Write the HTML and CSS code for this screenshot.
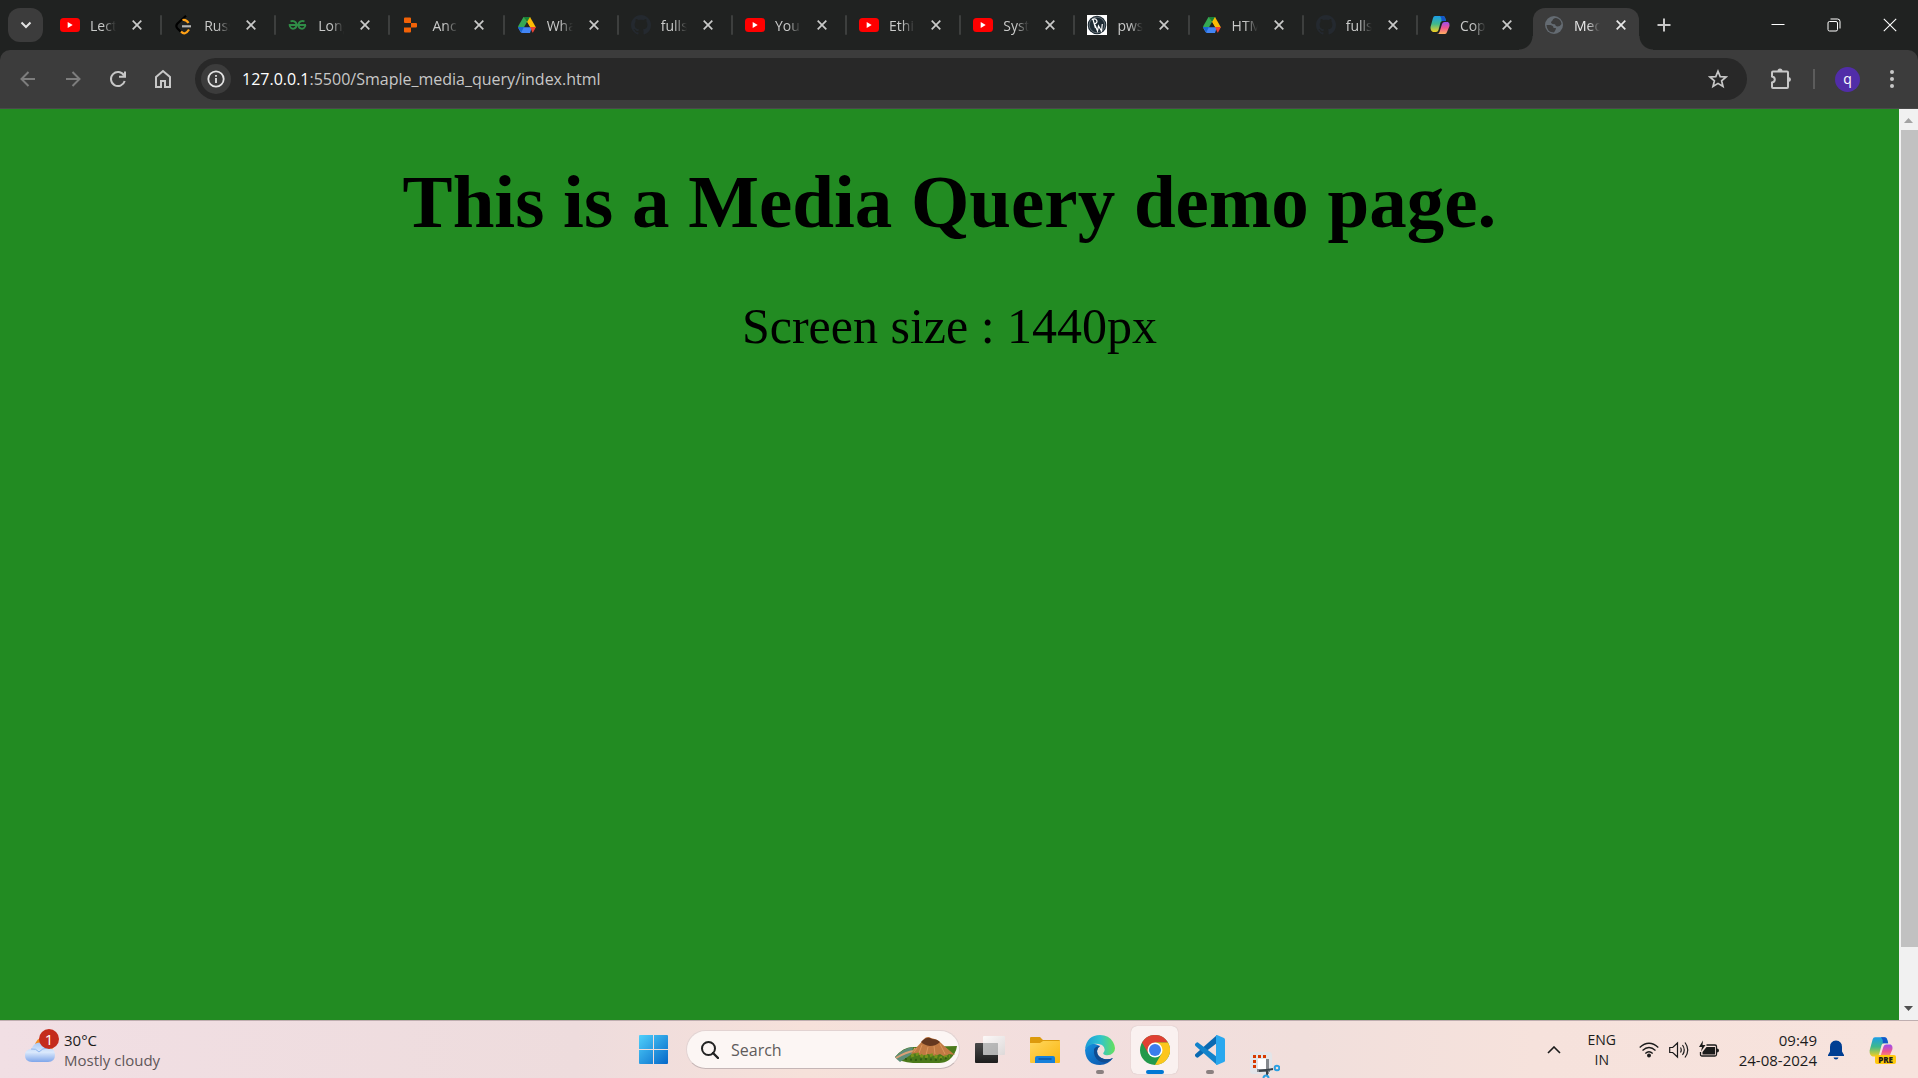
FILE: index.html
```html
<!DOCTYPE html>
<html lang="en">
<head>
<meta charset="utf-8">
<meta name="viewport" content="width=device-width, initial-scale=1">
<title>Media Query</title>
<link rel="stylesheet" href="styles.css">
</head>
<body>
<svg class="sprite" aria-hidden="true">
  <defs>
    <linearGradient id="cp-left" x1="0" y1="0" x2="0" y2="1"><stop offset="0" stop-color="#1b9de8"/><stop offset=".5" stop-color="#3fb98b"/><stop offset="1" stop-color="#f4cf22"/></linearGradient>
    <linearGradient id="cp-right" x1="0" y1="0" x2="0" y2="1"><stop offset="0" stop-color="#9a4df0"/><stop offset=".5" stop-color="#f0568e"/><stop offset="1" stop-color="#ffb060"/></linearGradient>
    <linearGradient id="win" x1="0" y1="0" x2="1" y2="1"><stop offset="0" stop-color="#4fd0fb"/><stop offset="1" stop-color="#0567c8"/></linearGradient>
    <linearGradient id="cloud" x1="0" y1="0" x2="0" y2="1"><stop offset="0" stop-color="#a9c9f6"/><stop offset=".5" stop-color="#dbe9fc"/><stop offset="1" stop-color="#7fa6ea"/></linearGradient>
    <linearGradient id="edge-top" x1="0" y1="0" x2="1" y2="0"><stop offset="0" stop-color="#1b9ad8"/><stop offset=".5" stop-color="#2fc3cf"/><stop offset="1" stop-color="#66e05a"/></linearGradient>
    <linearGradient id="edge-low" x1="0" y1="0" x2="1" y2="1"><stop offset="0" stop-color="#1590df"/><stop offset="1" stop-color="#0c4ea6"/></linearGradient>
    <linearGradient id="folder" x1="0" y1="0" x2="1" y2="1"><stop offset="0" stop-color="#ffd75e"/><stop offset="1" stop-color="#fbb60f"/></linearGradient>
    <linearGradient id="dark-pane" x1="0" y1="0" x2="0" y2="1"><stop offset="0" stop-color="#4a4a4a"/><stop offset="1" stop-color="#1d1d1d"/></linearGradient>
    <linearGradient id="light-pane" x1="0" y1="0" x2="1" y2="1"><stop offset="0" stop-color="#fff"/><stop offset="1" stop-color="#d8d8d8"/></linearGradient>
  </defs>
  <symbol id="close" viewBox="0 0 10 10"><path d="M.7.7l8.6 8.6M9.3.7L.7 9.3" fill="none" stroke="currentColor" stroke-width="1.7"/></symbol>
  <symbol id="youtube" viewBox="0 0 20 20"><rect y="3" width="20" height="14" rx="3.5" fill="#f00"/><path d="M7.700 7v6l5-3z" fill="#fff"/></symbol>
  <symbol id="leetcode" viewBox="0 0 20 20" fill="none" stroke-width="2.200"><path d="M12 .8L3.500 8.500q-2.300 2.500 0 5L7 17" stroke="#000"/><path d="M8.500 5q3.500-1 6 3M7 16.500q4 4.500 8-2" stroke="#ffa116"/><path d="M8 11.300h9" stroke="#b3b3b3"/></symbol>
  <symbol id="gfg" viewBox="0 0 20 20" fill="none" stroke="#2f8d46" stroke-width="1.900"><path d="M2.500 6.500c2-1 6-.5 6 3.500s-5 5-6.500 1.500c-.3-.7-.3-1-.3-1.500H18M16.500 6.500c-2-1-6-.5-6 3.500s5 5 6.500 1.500c.3-.7.3-1 .3-1.500"/></symbol>
  <symbol id="replit" viewBox="0 0 20 20"><path d="M3 2.500h5q1 0 1 1V8H3q-1 0-1-1V3.500q0-1 1-1zM9 8h5q1 0 1 1v2.500q0 1-1 1H9zM2 12.500h7v4q0 1-1 1H3q-1 0-1-1z" fill="#f26207"/></symbol>
  <symbol id="drive" viewBox="0 0 20 20"><path d="M6.500 2h7l-8 15L1 11.500z" fill="#34a853"/><path d="M7 2h6l6 10.500h-6z" fill="#fbbc04"/><path d="M6.500 2H13l-3 5z" fill="#188038"/><path d="M4.500 12H15l-2 6H5.500q-1.500 0-2.300-1.500L1 12.500z" fill="#4285f4"/><path d="M13 12h6l-3 5.500h-.5z" fill="#ea4335"/><path d="M1 12h6l-2.800 5.500z" fill="#1967d2"/><path d="M10 7l3 5.200H7z" fill="#202221"/></symbol>
  <symbol id="github" viewBox="0 0 16 16"><path fill="#24292f" d="M8 0C3.580 0 0 3.580 0 8c0 3.540 2.290 6.530 5.470 7.590.4.070.55-.17.55-.38 0-.19-.01-.82-.01-1.490-2.010.37-2.530-.49-2.690-.94-.09-.23-.48-.94-.82-1.130-.28-.15-.68-.52-.01-.53.63-.01 1.080.58 1.230.82.72 1.210 1.870.87 2.330.66.070-.52.28-.87.51-1.070-1.780-.2-3.640-.89-3.640-3.950 0-.87.31-1.590.82-2.150-.08-.2-.36-1.020.08-2.120 0 0 .67-.21 2.200.82.64-.18 1.320-.27 2-.27s1.360.09 2 .27c1.530-1.040 2.200-.82 2.200-.82.44 1.100.16 1.920.08 2.120.51.56.82 1.270.82 2.150 0 3.070-1.870 3.750-3.650 3.950.29.25.54.73.54 1.480 0 1.070-.01 1.930-.01 2.200 0 .21.15.46.55.38A8.010 8.010 0 0 0 16 8c0-4.420-3.580-8-8-8z"/></symbol>
  <symbol id="pw" viewBox="0 0 20 20"><path fill="#fff" d="M0 0h20v20H0z"/><circle cx="10" cy="10" r="9.300" fill="#1d2a33"/><circle cx="10" cy="10" r="7.800" fill="none" stroke="#8d979c" stroke-width=".6"/><path d="M6 4.500l2.500 8.500M5 4.500c5-2 7 3 2.500 4.500M8 10l2.500 6 1-5 3 5 .8-7" fill="none" stroke="#fff" stroke-width="1.200"/></symbol>
  <symbol id="copilot" viewBox="0 0 20 20"><path d="M5 1h8q1.500 0 2 1.500L16 6h-3.500Q11 6 10.500 7.500L8.500 15q-.5 2-2.500 2H3Q.3 16 .5 12L3 3q.5-2 2-2z" fill="url(#cp-left)"/><path d="M10 1h3q1.500 0 2 1.500L16 6h-4.500Q12 3 10 1z" fill="#1457c9"/><path d="M15 19H7q2 0 2.700-2.500L12 9q.7-2 2.500-2H18q2 1 1.500 4L17 17q-.5 2-2 2z" fill="url(#cp-right)"/></symbol>
  <symbol id="globe" viewBox="0 0 20 20"><circle cx="10" cy="10" r="9" fill="#646b72"/><path d="M12 3q-3 0-3.500 2.500Q7 6 7 8q2 1.500 4 1.200.5 2.300 2.500 2.300 2.500 0 4-2.500Q17 4 12 3zM2.500 10h4q3 .5 3 3H12q0 2-2 4.500-7 0-7.500-7.500z" fill="#3c3c3c"/></symbol>
</svg>

<div class="screen">
  <header class="browser">
    <div class="tabstrip">
      <button class="tab-search" aria-label="Search tabs"><svg viewBox="0 0 12 8" width="12" height="8"><path d="M1.500 1.500L6 6l4.500-4.500" fill="none" stroke="#e3e3e3" stroke-width="2"/></svg></button>
      <div class="tabs">
        <div class="tab"><svg class="favicon"><use href="#youtube"/></svg><span class="tab-title">Lect</span><button class="tab-close" aria-label="Close tab"><svg><use href="#close"/></svg></button></div>
        <div class="tab"><svg class="favicon"><use href="#leetcode"/></svg><span class="tab-title">Russ</span><button class="tab-close" aria-label="Close tab"><svg><use href="#close"/></svg></button></div>
        <div class="tab"><svg class="favicon"><use href="#gfg"/></svg><span class="tab-title">Long</span><button class="tab-close" aria-label="Close tab"><svg><use href="#close"/></svg></button></div>
        <div class="tab"><svg class="favicon"><use href="#replit"/></svg><span class="tab-title">Anc</span><button class="tab-close" aria-label="Close tab"><svg><use href="#close"/></svg></button></div>
        <div class="tab"><svg class="favicon"><use href="#drive"/></svg><span class="tab-title">Wha</span><button class="tab-close" aria-label="Close tab"><svg><use href="#close"/></svg></button></div>
        <div class="tab"><svg class="favicon"><use href="#github"/></svg><span class="tab-title">fulls</span><button class="tab-close" aria-label="Close tab"><svg><use href="#close"/></svg></button></div>
        <div class="tab"><svg class="favicon"><use href="#youtube"/></svg><span class="tab-title">You</span><button class="tab-close" aria-label="Close tab"><svg><use href="#close"/></svg></button></div>
        <div class="tab"><svg class="favicon"><use href="#youtube"/></svg><span class="tab-title">Ethi</span><button class="tab-close" aria-label="Close tab"><svg><use href="#close"/></svg></button></div>
        <div class="tab"><svg class="favicon"><use href="#youtube"/></svg><span class="tab-title">Syst</span><button class="tab-close" aria-label="Close tab"><svg><use href="#close"/></svg></button></div>
        <div class="tab"><svg class="favicon"><use href="#pw"/></svg><span class="tab-title">pws</span><button class="tab-close" aria-label="Close tab"><svg><use href="#close"/></svg></button></div>
        <div class="tab"><svg class="favicon"><use href="#drive"/></svg><span class="tab-title">HTM</span><button class="tab-close" aria-label="Close tab"><svg><use href="#close"/></svg></button></div>
        <div class="tab"><svg class="favicon"><use href="#github"/></svg><span class="tab-title">fulls</span><button class="tab-close" aria-label="Close tab"><svg><use href="#close"/></svg></button></div>
        <div class="tab"><svg class="favicon"><use href="#copilot"/></svg><span class="tab-title">Cop</span><button class="tab-close" aria-label="Close tab"><svg><use href="#close"/></svg></button></div>
        <div class="tab active"><svg class="favicon"><use href="#globe"/></svg><span class="tab-title">Med</span><button class="tab-close" aria-label="Close tab"><svg><use href="#close"/></svg></button></div>
      </div>
      <button class="new-tab" aria-label="New tab"><svg viewBox="0 0 14 14" width="14" height="14"><path d="M7 .5v13M.5 7h13" stroke="#c7c7c7" stroke-width="2"/></svg></button>
      <div class="window-controls">
        <button aria-label="Minimize"><svg viewBox="0 0 14 14" width="14" height="14"><path d="M.5 6.500h13" stroke="#fff"/></svg></button>
        <button aria-label="Restore"><svg viewBox="0 0 14 14" width="14" height="14" fill="none" stroke="#fff"><rect x="1" y="3.500" width="9.500" height="9.500" rx="1.500"/><path d="M3.500 1h7q2.500 0 2.500 2.500v7"/></svg></button>
        <button aria-label="Close"><svg viewBox="0 0 14 14" width="14" height="14"><path d="M.8.8l12.400 12.400M13.200.8L.8 13.200" stroke="#fff" stroke-width="1.100"/></svg></button>
      </div>
    </div>

    <div class="toolbar">
      <nav class="nav-buttons">
        <button class="dim" aria-label="Back"><svg viewBox="0 0 20 20"><path d="M17 10H4M10.500 3L3.500 10l7 7"/></svg></button>
        <button class="dim" aria-label="Forward"><svg viewBox="0 0 20 20"><path d="M3 10h13M9.500 3l7 7-7 7"/></svg></button>
        <button aria-label="Reload"><svg viewBox="0 0 20 20"><path d="M16 6.500A7 7 0 1 0 16.700 12M17 2.500v5.300h-6"/></svg></button>
        <button aria-label="Home"><svg viewBox="0 0 20 20"><path d="M3 8L10 2l7 6v10h-5v-6H8v6H3z"/></svg></button>
      </nav>
      <div class="omnibox">
        <button class="site-info" aria-label="View site information"><svg viewBox="0 0 18 18" width="18" height="18"><circle cx="9" cy="9" r="7.700" fill="none" stroke="#e3e3e3" stroke-width="1.800"/><path d="M9 8v5M9 5v1.800" stroke="#e3e3e3" stroke-width="1.800"/></svg></button>
        <a class="address" href="#"><span class="host">127.0.0.1</span>:5500/Smaple_media_query/index.html</a>
        <button class="bookmark" aria-label="Bookmark this tab"><svg viewBox="0 0 20 20" width="20" height="20"><path d="M10 2.200l2.200 5.400 5.800.4-4.400 3.800 1.400 5.700-5-3.100-5 3.100 1.400-5.700L2 8l5.800-.4z" fill="none" stroke="#c7c7c7" stroke-width="1.700"/></svg></button>
      </div>
      <div class="actions">
        <button class="extensions" aria-label="Extensions"><svg viewBox="0 0 22 22" width="22" height="22"><path d="M2 4.500Q2 3.500 3 3.500H17q1 0 1 1V19q0 1-1 1H3q-1 0-1-1v-4.500q2.800-.5 2.800-3T2 8.500z" fill="none" stroke="#c7c7c7" stroke-width="2"/><path d="M7.500 3a2.500 2.500 0 0 1 5 0zM18.500 9a2.500 2.500 0 0 1 0 5z" fill="#c7c7c7"/></svg></button>
        <span class="divider"></span>
        <button class="avatar" aria-label="Profile">q</button>
        <button class="menu" aria-label="Menu"><svg viewBox="0 0 4 20" width="4" height="20" fill="#c7c7c7"><circle cx="2" cy="3" r="2"/><circle cx="2" cy="10" r="2"/><circle cx="2" cy="17" r="2"/></svg></button>
      </div>
    </div>
  </header>

  <div class="viewport">
    <main class="page">
      <h1>This is a Media Query demo page.</h1>
      <p>Screen size : 1440px</p>
    </main>
    <div class="scrollbar" aria-hidden="true">
      <svg viewBox="0 0 19 21"><path d="M5 14h9l-4.500-5z" fill="#a3a3a3"/></svg>
      <div class="track"><div class="thumb"></div></div>
      <svg viewBox="0 0 19 21"><path d="M5 7h9l-4.500 5z" fill="#505050"/></svg>
    </div>
  </div>

  <footer class="taskbar">
    <button class="weather">
      <span class="weather-icon"><svg viewBox="0 0 30 34" width="30" height="34"><circle cx="19" cy="17" r="9" fill="#f58a1f"/><path d="M7 33q-7 0-7-6.500T6.500 20Q9 13 15.500 13.500 21 14 23 19q7 0 7 7t-7 7z" fill="url(#cloud)"/><path d="M6 20q5-1 8 3 3-4 9-4" fill="none" stroke="#8fb5ef"/></svg><span class="badge">1</span></span>
      <span class="weather-text"><span>30°C</span><span class="muted">Mostly cloudy</span></span>
    </button>

    <div class="dock">
      <button class="app" aria-label="Start"><svg viewBox="0 0 29 29" width="29" height="29" fill="url(#win)"><path d="M1 0h13v14H0V1q0-1 1-1zM15 0h13q1 0 1 1v13H15zM0 15h14v14H1q-1 0-1-1zM15 15h14v13q0 1-1 1H15z"/></svg></button>
      <label class="search">
        <svg viewBox="0 0 18 18" width="18" height="18"><circle cx="7.500" cy="7.500" r="6.500" fill="none" stroke="#222" stroke-width="2"/><path d="M12 12l5 5" stroke="#222" stroke-width="2.400" stroke-linecap="round"/></svg>
        <input type="search" placeholder="Search" aria-label="Search">
        <svg viewBox="0 0 62 26" width="62" height="26"><path d="M0 20Q9 9 19 10l43-1q-1 8-8 14-4 3-10 3H18Q5 25 0 20z" fill="#4b7a1b"/><path d="M0 20Q8 11 18 10l-1 7-12 8Q1 22 0 20z" fill="#5d8d79"/><path d="M1 21q10-6 18-7l1-3" fill="none" stroke="#d9a077" stroke-width="2"/><path d="M18 14Q24 8 30 1q3-2 6 0 6 1 9 4 5 5 15 13l-6-1-4 3-5-3-5 2-7-2-7 2-4-3-6 1z" fill="#c17a43"/><path d="M28 3q5-4 9-1 5 0 8 3-4 4-10 4-6-1-9-4z" fill="#65381f"/><path d="M27 8l-3 8M33 10l-2 8M39 9l1 8M45 7l5 10M22 11l-3 4" stroke="#dc965d" stroke-width="1"/><path d="M16 19l7-2 6 3 8-2 8 3 10-2" fill="none" stroke="#77921d" stroke-width="3" stroke-dasharray="3 2"/><path d="M10 22l10 1 10-1 12 1 10-2" fill="none" stroke="#315b12" stroke-width="2" stroke-dasharray="2 3"/></svg>
      </label>
      <button class="app" aria-label="Task view"><svg viewBox="0 0 30 30" width="30" height="30"><rect y="8" width="23" height="20" rx="1" fill="url(#dark-pane)"/><rect x="8" y="1" width="22" height="19" rx="1" fill="url(#light-pane)" opacity=".8"/><path d="M8 8h15v12H8z" fill="#aaa" opacity=".6"/></svg></button>
      <button class="app" aria-label="File Explorer"><svg viewBox="0 0 30 30" width="30" height="30"><path d="M0 3q0-1 1-1h9l3 3h16q1 0 1 1v5H0z" fill="#dc9a0c"/><path d="M0 8h10l3-2h17v21q0 1-1 1H1q-1 0-1-1z" fill="url(#folder)"/><path d="M5 28v-5q0-2 2-2h16q2 0 2 2v5z" fill="#1680da"/><path d="M9 24h12" stroke="#0b55a4" stroke-width="1.500" stroke-linecap="round"/></svg></button>
      <button class="app running" aria-label="Edge"><svg viewBox="0 0 30 30" width="30" height="30"><path d="M0 15q1 15 15 15 8 0 13-7-4 2-9 1-7-2-7-8 0-3 3-5Q3 5 0 15z" fill="url(#edge-low)"/><path d="M9 14q-1 8 5 12 7 4 14-3-4 2-9 1-7-2-7-8 0-3 3-5-4 0-6 3z" fill="#104c91"/><path d="M0 14Q2 0 15 0q9 0 13 7 4 7 0 11-3 3-8 2-3-1-1-3 2-4-2-7Q7 6 0 14z" fill="url(#edge-top)"/></svg></button>
      <button class="app running current" aria-label="Chrome"><svg viewBox="0 0 30 30" width="30" height="30"><circle cx="15" cy="15" r="15" fill="#23994b"/><path d="M2 7.500A15 15 0 0 1 28 7.500H15L8.500 18.700z" fill="#df4032"/><path d="M28 7.500A15 15 0 0 1 15 30l6.500-11.200L15 7.500z" fill="#fcc61c"/><circle cx="15" cy="15" r="7.500" fill="#fff"/><circle cx="15" cy="15" r="6" fill="#3b7ded"/></svg></button>
      <button class="app running" aria-label="Visual Studio Code"><svg viewBox="0 0 30 30" width="30" height="30"><path d="M22 0v8L3 22.500q-1 .5-2-.5l-1-1q-.5-1 .5-2z" fill="#0a6ab2"/><path d="M22 30v-8L3 7.500q-1-.5-2 .5l-1 1q-.5 1 .5 2z" fill="#1283cb"/><path d="M22 0l7 3q1 .5 1 1.500v21q0 1-1 1.500l-7 3q-1 0-1-1V1q0-1 1-1z" fill="#29a8ef"/></svg></button>
      <button class="app low" aria-label="Snipping Tool"><svg viewBox="0 0 30 26" width="30" height="26"><rect width="22" height="22" rx="3" fill="#e3e5e9"/><path d="M8 7h8v10H8z" fill="#fff"/><path d="M4.500 16V4.500H17" fill="none" stroke="#d83b01" stroke-width="3" stroke-dasharray="3 2"/><path d="M7 18.500h13M17.500 7v15" stroke="#85898e" stroke-width="3"/><path d="M9 19l14-2M17 18v6" fill="none" stroke="#3a4249" stroke-width="2"/><circle cx="27" cy="16" r="2.300" fill="none" stroke="#2ba0e2" stroke-width="2"/><circle cx="16" cy="26" r="2.500" fill="none" stroke="#2ba0e2" stroke-width="2"/></svg></button>
    </div>

    <div class="tray">
      <button class="chevron" aria-label="Show hidden icons"><svg viewBox="0 0 14 8" width="14" height="8"><path d="M1 7l6-6 6 6" fill="none" stroke="#1b1b1b" stroke-width="1.600"/></svg></button>
      <button class="language"><span>ENG</span><span>IN</span></button>
      <button class="status" aria-label="Network, volume and battery">
        <svg viewBox="0 0 20 20" width="20" height="20" fill="none" stroke="#1b1b1b" stroke-width="1.300"><path d="M.7 7.500q9.300-8.500 18.600 0M3.500 10.500q6.500-6 13 0M6.300 13.500q3.700-3.500 7.400 0"/><circle cx="10" cy="15.500" r="1.300" fill="#1b1b1b"/></svg>
        <svg viewBox="0 0 20 20" width="20" height="20" fill="none" stroke="#1b1b1b" stroke-width="1.200"><path d="M.7 7.500h3L8.500 3v14l-4.800-4.500h-3zM11.500 7.500q1.500 2.500 0 5M13.500 5q3.500 5 0 10M16 2.500q5.500 7.500 0 15"/></svg>
        <svg viewBox="0 0 20 20" width="20" height="20"><path d="M7.500 5H16q1.500 0 1.500 1.500v8Q17.500 16 16 16H3q-1.500 0-1.500-1.500V12" fill="none" stroke="#1b1b1b" stroke-width="1.300"/><path d="M7.500 7H16v7.500H3.500V12zM18 8.500q2 0 2 2t-2 2zM4 .5L0 7h3l-1 4.500L6.500 5h-3z" fill="#1b1b1b"/></svg>
      </button>
      <button class="clock"><span>09:49</span><span>24-08-2024</span></button>
      <button class="bell" aria-label="Notifications"><svg viewBox="0 0 18 20" width="18" height="20" fill="#003e92"><path d="M9 .5q6 .5 6 6.500v4.500l2 3.500v1H1v-1l2-3.500V7Q3 1 9 .5zM6.500 17.500h5q-.5 2-2.500 2t-2.500-2z"/></svg></button>
      <button class="copilot" aria-label="Copilot"><svg width="28" height="28" viewBox="0 0 28 28"><use href="#copilot" width="28" height="24" preserveAspectRatio="none"/></svg><span>PRE</span></button>
    </div>
  </footer>
</div>
</body>
</html>
```
FILE: styles.css
```css
* {
  box-sizing: border-box;
}

body {
  margin: 0;
  font-family: "Open Sans", "Noto Sans", sans-serif;
}

button {
  display: flex;
  align-items: center;
  justify-content: center;
  padding: 0;
  border: 0;
  background: none;
  color: inherit;
  font: inherit;
}

.sprite {
  position: absolute;
  width: 0;
  height: 0;
}

.screen {
  display: flex;
  flex-direction: column;
  height: 100vh;
  overflow: hidden;
}

/* Tab strip */
.tabstrip {
  display: flex;
  height: 50px;
  background: #202221;
}

.tab-search {
  flex: none;
  width: 35px;
  height: 34px;
  margin: 8px 6px 8px 8px;
  border-radius: 12px;
  background: #3c3c3c;
}

.tabs {
  display: flex;
  flex: 0 1 1598px;
  min-width: 0;
}

.tab {
  position: relative;
  display: flex;
  flex: 1 1 8px;
  align-items: center;
  min-width: 0;
  padding-left: 11px;
  color: #c9cac9;
  font-size: 14px;
}

.tab:not(.active)::after {
  content: "";
  position: absolute;
  right: 1px;
  width: 2px;
  height: 20px;
  border-radius: 1px;
  background: #3d3f3e;
}

.tab:nth-last-child(2)::after {
  display: none;
}

.favicon {
  flex: none;
  width: 20px;
  height: 20px;
}

.tab-title {
  flex: none;
  width: 26px;
  margin: 0 16px 0 10px;
  overflow: hidden;
  white-space: nowrap;
  mask-image: linear-gradient(to right, #000 50%, transparent);
}

.tab-close svg {
  width: 10px;
  height: 10px;
}

.tab.active {
  flex: 0 0 106px;
  margin: 8px 8px 0 0;
  padding-bottom: 8px;
  border-radius: 12px 12px 0 0;
  background: #3c3c3c;
  color: #e9e9e9;
}

.tab.active::before,
.tab.active::after {
  content: "";
  position: absolute;
  bottom: 0;
  width: 14px;
  height: 14px;
}

.tab.active::before {
  right: 100%;
  background: radial-gradient(circle at 0 0, #202221 13px, #3c3c3c 14px);
}

.tab.active::after {
  left: 100%;
  background: radial-gradient(circle at 100% 0, #202221 13px, #3c3c3c 14px);
}

.new-tab {
  flex: none;
  width: 34px;
}

.window-controls {
  display: flex;
  margin-left: auto;
}

.window-controls button {
  width: 56px;
}

/* Toolbar */
.browser {
  flex: none;
  background: #202221;
}

.toolbar {
  display: flex;
  align-items: center;
  height: 59px;
  border-bottom: 1px solid #4a4a4a;
  border-radius: 10px 10px 0 0;
  background: #3c3c3c;
}

.nav-buttons {
  display: flex;
  padding: 0 10px 0 5px;
}

.nav-buttons button {
  width: 45px;
  height: 40px;
}

.nav-buttons svg {
  width: 20px;
  height: 20px;
  fill: none;
  stroke: #c7c7c7;
  stroke-width: 2;
}

.nav-buttons .dim svg {
  stroke: #7d7d7d;
}

.omnibox {
  display: flex;
  flex: 1;
  align-items: center;
  height: 42px;
  padding: 0 19px 0 6px;
  border-radius: 21px;
  background: #282828;
}

.site-info {
  width: 30px;
  height: 30px;
  border-radius: 50%;
  background: #3c3c3c;
}

.address {
  flex: 1;
  margin-left: 11px;
  color: #c7c7c7;
  font-size: 16px;
  text-decoration: none;
}

.host {
  color: #fff;
}

.actions {
  display: flex;
  align-items: center;
  width: 171px;
  padding-left: 23px;
}

.divider {
  width: 2px;
  height: 20px;
  margin: 0 20px 0 21px;
  background: #5c5c5c;
}

.avatar {
  width: 25px;
  height: 25px;
  padding-bottom: 2px;
  border-radius: 50%;
  background: #512da8;
  color: #fff;
  font-size: 14px;
}

.menu {
  margin-left: 30px;
}

/* Web page */
.viewport {
  display: flex;
  flex: 1;
  min-height: 0;
}

.page {
  flex: 1;
  background: forestgreen;
  color: #000;
  font-family: "Liberation Serif", serif;
  text-align: center;
}

.page h1 {
  margin: 50px 0;
  font-size: 75px;
}

.page p {
  margin: 52px 0;
  font-size: 50px;
}

.scrollbar {
  display: flex;
  flex-direction: column;
  width: 19px;
  background: #f1f1f1;
}

.scrollbar svg {
  flex: none;
  height: 21px;
}

.track {
  flex: 1;
  padding-left: 2px;
}

.thumb {
  height: 94%;
  background: #c1c1c1;
}

/* Taskbar */
.taskbar {
  display: grid;
  flex: none;
  grid-template-columns: 1fr auto 1fr;
  height: 58px;
  border-top: 1px solid #bfaeb0;
  background: linear-gradient(to right, #f1dfe4, #eedcdd 30%, #f6e1da 42%, #f2dede 55%, #f1dfdc 68%, #f6e2dc 80%, #f7e3dd);
  color: #1b1b1b;
  font-size: 15px;
  line-height: 20px;
}

.weather {
  justify-self: start;
  gap: 9px;
  padding-left: 25px;
}

.weather-icon {
  position: relative;
  display: flex;
  margin-bottom: 8px;
}

.badge {
  position: absolute;
  top: 0;
  right: -4px;
  width: 20px;
  height: 20px;
  border-radius: 50%;
  background: #c42b1c;
  color: #fff;
}

.weather-text {
  display: flex;
  flex-direction: column;
  text-align: left;
}

.muted {
  color: #5f5759;
}

.dock {
  display: flex;
  align-items: center;
}

.app {
  position: relative;
  width: 55px;
  height: 100%;
}

.app.running::after {
  content: "";
  position: absolute;
  bottom: 4px;
  width: 8px;
  height: 4px;
  border-radius: 2px;
  background: #8a8080;
}

.app.current::before {
  content: "";
  position: absolute;
  inset: 5px 4px 4px;
  border-radius: 6px;
  background: #faf1f0;
  box-shadow: 0 0 1px #b9a9a9;
}

.app.current::after {
  width: 18px;
  background: #0078d4;
}

.app svg {
  position: relative;
}

.app.low {
  align-items: end;
}

.search {
  display: flex;
  align-items: center;
  width: 274px;
  height: 39px;
  margin: 0 2px 0 5px;
  padding: 0 2px 0 14px;
  border: 1px solid #e2d3d2;
  border-bottom-color: #c5b6b6;
  border-radius: 20px;
  background: #fcf6f4;
}

.search input {
  flex: 1;
  min-width: 0;
  margin-left: 12px;
  padding: 0;
  border: 0;
  background: none;
  font: inherit;
  font-size: 16px;
}

.search input::placeholder {
  color: #5f5b5b;
}

.tray {
  display: flex;
  align-items: center;
  justify-self: end;
  padding-right: 23px;
}

.language,
.clock {
  flex-direction: column;
}

.language {
  width: 30px;
  margin: 0 22px 0 26px;
  font-size: 14px;
}

.status {
  gap: 10px;
}

.clock {
  align-items: flex-end;
  margin-left: 20px;
}

.bell {
  margin: 0 22px 0 10px;
}

.copilot {
  position: relative;
  width: 28px;
  height: 28px;
}

.copilot span {
  position: absolute;
  right: -1px;
  bottom: 0;
  padding: 0 3px;
  border-radius: 2px;
  background: #ffc90e;
  font-size: 8px;
  font-weight: 800;
  line-height: 9px;
}
```
